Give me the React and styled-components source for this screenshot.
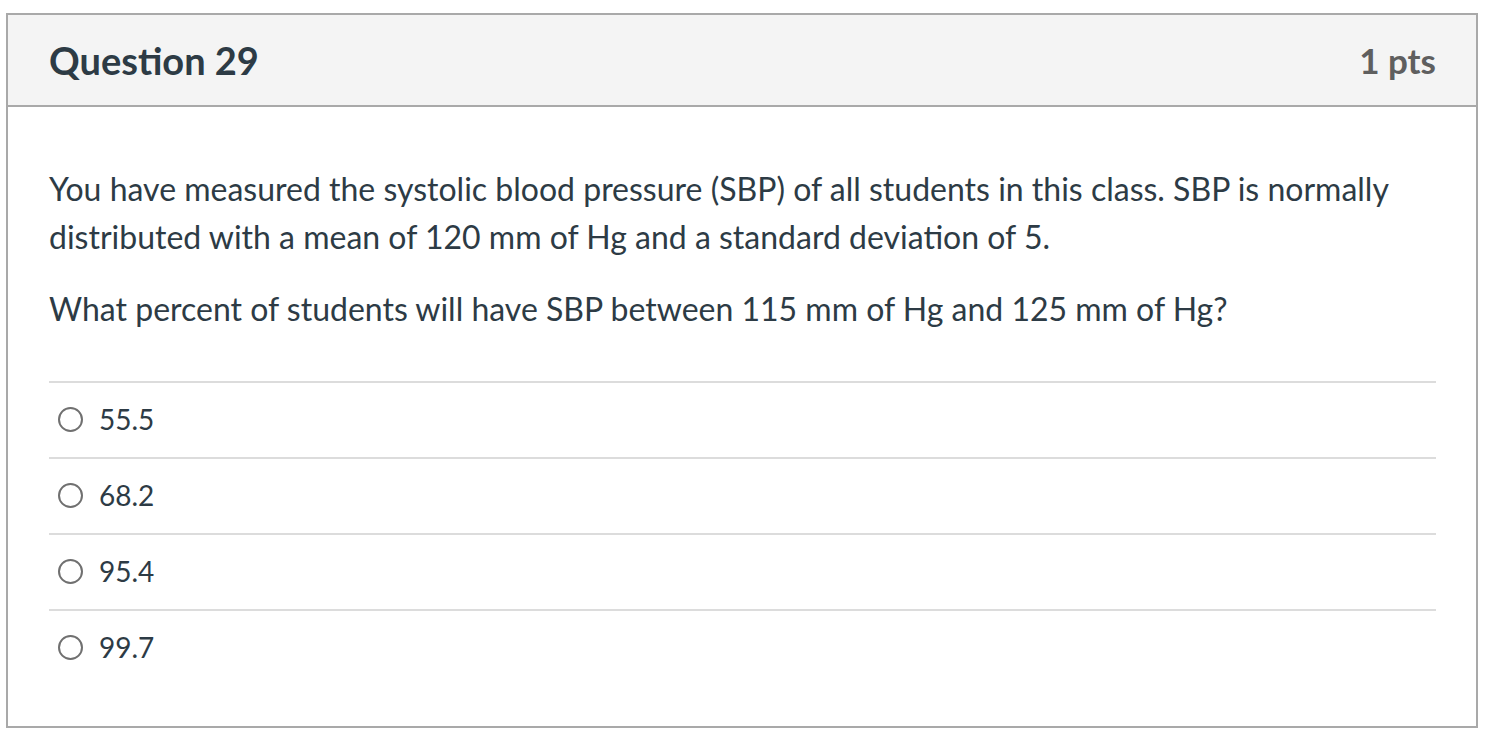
import React from "react";
import styled, { createGlobalStyle } from "styled-components";

const Global = createGlobalStyle`
  html, body { margin: 0; padding: 0; background: #fff; }
  body { font-family: Lato, "Open Sans", sans-serif; color: #2d3b45; }
`;

const Page = styled.div`
  padding: 13px 12px 11px 6px;
`;

const Card = styled.section`
  border: 2px solid #a9a9a9;
  background: #fff;
`;

const Header = styled.header`
  display: flex;
  align-items: center;
  justify-content: space-between;
  height: 90px;
  padding: 0 40px 0 41px;
  background: #f4f4f4;
  border-bottom: 2px solid #a9a9a9;
`;

const Title = styled.h2`
  margin: 0;
  font-family: Lato, sans-serif;
  font-weight: 700;
  font-size: 38px;
  color: #2d3b45;
`;

const Points = styled.div`
  font-family: Lato, sans-serif;
  font-weight: 700;
  font-size: 35px;
  color: #5f5f5f;
`;

const Body = styled.div`
  padding: 58px 40px 41px 41px;
`;

const Para = styled.p`
  margin: 0 0 24px;
  font-size: 32px;
  line-height: 48px;
  color: #2d3b45;
`;

const Answers = styled.div`
  margin-top: 48px;
`;

const Answer = styled.label`
  display: flex;
  align-items: center;
  gap: 16px;
  height: 76px;
  padding-left: 9px;
  padding-bottom: 2px;
  border-top: 2px solid #dcdcdc;
  box-sizing: border-box;
  font-size: 28px;
  color: #2d3b45;
`;

const Radio = styled.span`
  width: 25px;
  height: 25px;
  border-radius: 50%;
  border: 2px solid #707070;
  box-sizing: border-box;
  flex: none;
`;

const options = ["55.5", "68.2", "95.4", "99.7"];

export default function App() {
  return (
    <>
      <Global />
      <Page>
        <Card>
          <Header>
            <Title>Question 29</Title>
            <Points>1 pts</Points>
          </Header>
          <Body>
            <Para>
              You have measured the systolic blood pressure (SBP) of all students in this class. SBP is normally
              distributed with a mean of 120 mm of Hg and a standard deviation of 5.
            </Para>
            <Para>What percent of students will have SBP between 115 mm of Hg and 125 mm of Hg?</Para>
            <Answers>
              {options.map((o) => (
                <Answer key={o}>
                  <Radio />
                  {o}
                </Answer>
              ))}
            </Answers>
          </Body>
        </Card>
      </Page>
    </>
  );
}
